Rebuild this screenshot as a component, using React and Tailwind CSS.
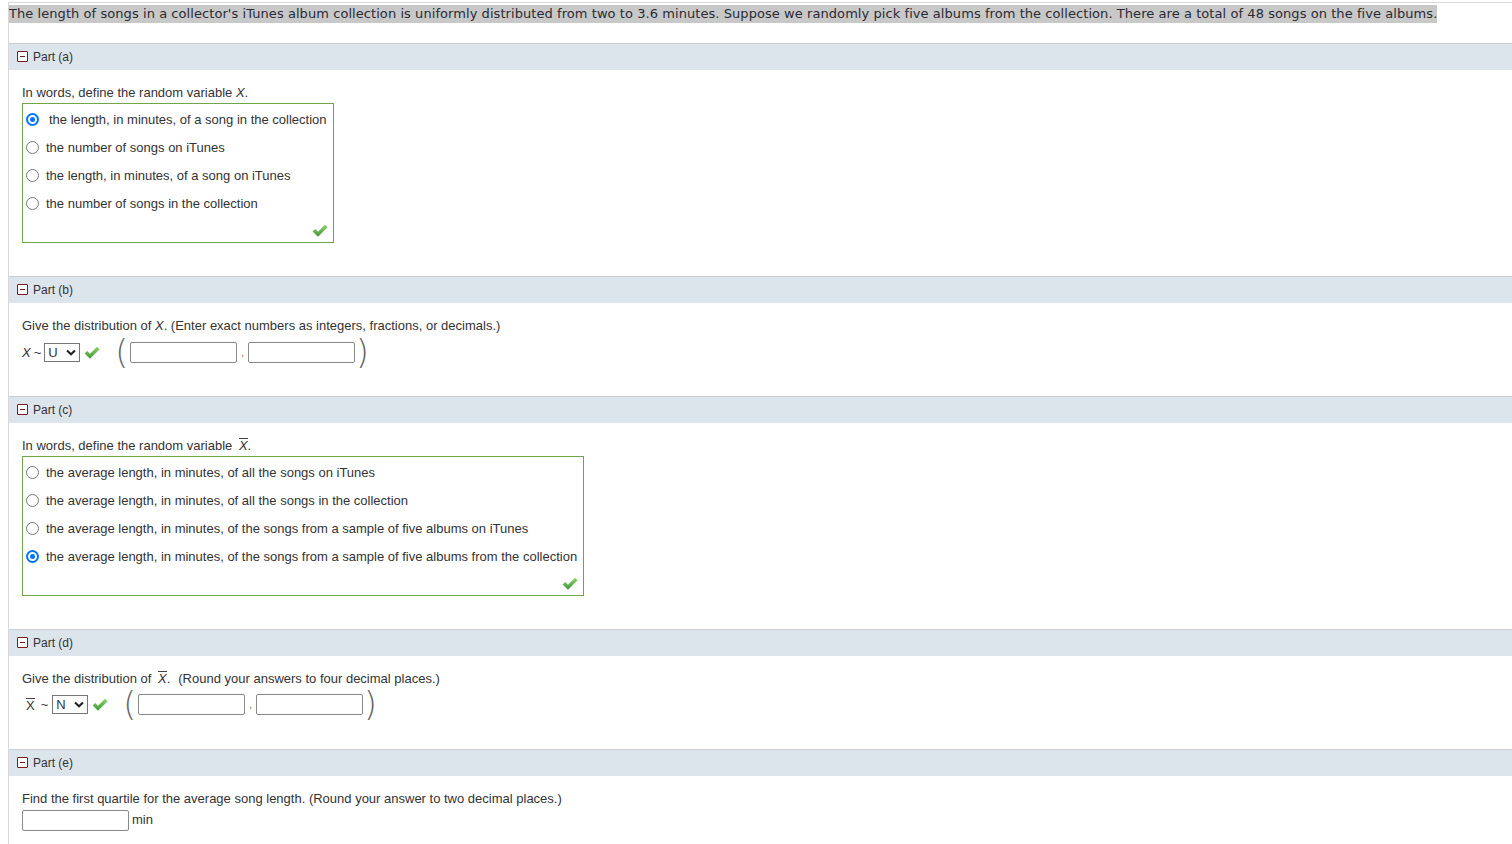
const sans = "font-['Liberation_Sans',Arial,sans-serif]";

function MinusBox() {
  return (
    <span className="flex h-[11px] w-[11px] items-center justify-center rounded-[1px] border border-[#7b1a1a] bg-white">
      <span className="h-px w-[5px] bg-[#7b1a1a]" />
    </span>
  );
}

function Header({ label }) {
  return (
    <div className="flex h-[27px] items-center gap-[5px] border-t border-[#cdcdcd] bg-[#dce4ec] pl-[8px] text-[12px] text-[#333]">
      <MinusBox />
      <span>{label}</span>
    </div>
  );
}

function Check({ className = "" }) {
  return (
    <svg width="16" height="14" viewBox="0 0 16 14" className={className}>
      <defs>
        <linearGradient id="chk" x1="0" y1="0" x2="0" y2="1">
          <stop offset="0" stopColor="#8fd46a" />
          <stop offset="1" stopColor="#3f9638" />
        </linearGradient>
      </defs>
      <path d="M0.6 7.4 L3.2 5 L6 7.8 L13 0.8 L15.6 3.2 L6 12.8 Z" fill="url(#chk)" />
    </svg>
  );
}

function Radio({ checked }) {
  if (checked) {
    return (
      <span className="flex h-[13px] w-[13px] shrink-0 items-center justify-center rounded-full border-2 border-[#0075ff] bg-white">
        <span className="h-[5px] w-[5px] rounded-full bg-[#0075ff]" />
      </span>
    );
  }
  return <span className="h-[13px] w-[13px] shrink-0 rounded-full border border-[#767676] bg-white" />;
}

function ChoiceBox({ width, options, selected }) {
  return (
    <div className={`mt-[2px] border border-[#6fa64a] pt-[2px] ${width}`}>
      {options.map((opt, i) => (
        <div key={opt} className="flex h-[28px] items-center pl-[3px]">
          <Radio checked={i === selected} />
          <span className={i === selected && i === 0 ? "ml-[10px]" : "ml-[7px]"}>{opt}</span>
        </div>
      ))}
      <div className="flex justify-end pb-[4px] pr-[5px] pt-[6px]">
        <Check />
      </div>
    </div>
  );
}

function Select({ value }) {
  return (
    <span className="flex h-[19px] w-[36px] items-center justify-between border border-[#767676] bg-white pl-[3px] pr-[3px] text-[13px] text-[#333]">
      <span>{value}</span>
      <svg width="10" height="7" viewBox="0 0 10 7">
        <path d="M1 1.5 L5 5.3 L9 1.5" fill="none" stroke="#222" strokeWidth="2" />
      </svg>
    </span>
  );
}

function Field({ className = "" }) {
  return <span className={`block h-[21px] w-[107px] rounded-[2px] border border-[#8a8a8a] bg-white ${className}`} />;
}

function Paren({ children, className = "" }) {
  return (
    <span className={`font-['DejaVu_Sans',sans-serif] text-[33px] font-extralight leading-[30px] text-[#666] ${className}`}>
      {children}
    </span>
  );
}

function XBar({ italic = true }) {
  return (
    <span className={`inline-block border-t border-[#444] pt-px leading-[12px] ${italic ? "italic" : ""}`}>X</span>
  );
}

export default function App() {
  return (
    <div className={`min-h-screen bg-white ${sans}`}>
      <div className="ml-2 mt-[2px] border-l border-t border-[#d9d9d9] text-[13px] text-[#333]">
        {/* intro */}
        <div className="pt-px">
          <span className="inline-block bg-[#c8c8c8] font-['DejaVu_Sans',Verdana,sans-serif] text-[13px] leading-[18px] tracking-[0.065px] text-[#2b2b35]">
            The length of songs in a collector's iTunes album collection is uniformly distributed from two to 3.6 minutes. Suppose we randomly pick five albums from the collection. There are a total of 48 songs on the five albums.
          </span>
        </div>

        {/* Part (a) */}
        <div className="mt-[19px]">
          <Header label="Part (a)" />
          <div className="pb-[33px] pl-[13px] pt-[15px]">
            <p className="leading-[16px]">
              In words, define the random variable <span className="italic">X</span>.
            </p>
            <ChoiceBox
              width="w-[312px]"
              selected={0}
              options={[
                "the length, in minutes, of a song in the collection",
                "the number of songs on iTunes",
                "the length, in minutes, of a song on iTunes",
                "the number of songs in the collection",
              ]}
            />
          </div>
        </div>

        {/* Part (b) */}
        <Header label="Part (b)" />
        <div className="pb-[28px] pl-[13px] pt-[15px]">
          <p className="leading-[16px]">
            Give the distribution of <span className="italic">X</span>. (Enter exact numbers as integers, fractions, or decimals.)
          </p>
          <div className="mt-[4px] flex h-[30px] items-center">
            <span className="italic">X</span>
            <span className="ml-[3px]">~</span>
            <span className="ml-[3px]">
              <Select value="U" />
            </span>
            <Check className="ml-[4px]" />
            <Paren className="ml-[15px]">(</Paren>
            <Field className="ml-[2px]" />
            <span className="ml-[4px] mr-[4px] text-[10px] text-[#777]">,</span>
            <Field />
            <Paren className="ml-[1px]">)</Paren>
          </div>
        </div>

        {/* Part (c) */}
        <Header label="Part (c)" />
        <div className="pb-[33px] pl-[13px] pt-[15px]">
          <p className="leading-[16px]">
            In words, define the random variable <span className="ml-[3px]"><XBar /></span>.
          </p>
          <ChoiceBox
            width="w-[562px]"
            selected={3}
            options={[
              "the average length, in minutes, of all the songs on iTunes",
              "the average length, in minutes, of all the songs in the collection",
              "the average length, in minutes, of the songs from a sample of five albums on iTunes",
              "the average length, in minutes, of the songs from a sample of five albums from the collection",
            ]}
          />
        </div>

        {/* Part (d) */}
        <Header label="Part (d)" />
        <div className="pb-[29px] pl-[13px] pt-[15px]">
          <p className="leading-[16px]">
            Give the distribution of <span className="ml-[3px]"><XBar /></span>.
            <span className="ml-[8px]">(Round your answers to four decimal places.)</span>
          </p>
          <div className="ml-[4px] mt-[3px] flex h-[30px] items-center">
            <XBar italic={false} />
            <span className="ml-[6px]">~</span>
            <span className="ml-[4px]">
              <Select value="N" />
            </span>
            <Check className="ml-[4px]" />
            <Paren className="ml-[15px]">(</Paren>
            <Field className="ml-[2px]" />
            <span className="ml-[4px] mr-[4px] text-[10px] text-[#777]">,</span>
            <Field />
            <Paren className="ml-[1px]">)</Paren>
          </div>
        </div>

        {/* Part (e) */}
        <Header label="Part (e)" />
        <div className="pb-[20px] pl-[13px] pt-[15px]">
          <p className="leading-[16px]">
            Find the first quartile for the average song length. (Round your answer to two decimal places.)
          </p>
          <div className="mt-[3px] flex items-center">
            <Field />
            <span className="ml-[3px]">min</span>
          </div>
        </div>
      </div>
    </div>
  );
}
